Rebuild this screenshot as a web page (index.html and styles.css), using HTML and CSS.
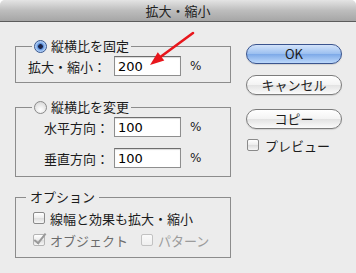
FILE: index.html
```html
<!DOCTYPE html>
<html>
<head>
<meta charset="utf-8">
<title>拡大・縮小</title>
<link rel="stylesheet" href="styles.css">
</head>
<body>
<div class="window">
	<div class="titlebar">拡大・縮小</div>
	<div class="content">
		<div class="left">
			<fieldset class="group g1">
				<legend><span class="radio on"></span>縦横比を固定</legend>
				<div class="row">
					<span class="label">拡大・縮小：</span>
					<span class="field">200</span>
					<span class="pct">%</span>
				</div>
			</fieldset>
			<fieldset class="group g2">
				<legend><span class="radio"></span>縦横比を変更</legend>
				<div class="row">
					<span class="label">水平方向：</span>
					<span class="field">100</span>
					<span class="pct">%</span>
				</div>
				<div class="row">
					<span class="label">垂直方向：</span>
					<span class="field">100</span>
					<span class="pct">%</span>
				</div>
			</fieldset>
			<fieldset class="group g3">
				<legend>オプション</legend>
				<div class="crow"><span class="check"></span>線幅と効果も拡大・縮小</div>
				<div class="crow dim">
					<span class="check checked"></span><span class="obj">オブジェクト</span>
					<span class="check faint"></span><span class="faint-text">パターン</span>
				</div>
			</fieldset>
		</div>
		<div class="right">
			<div class="btn default">OK</div>
			<div class="btn">キャンセル</div>
			<div class="btn copy">コピー</div>
			<div class="crow preview"><span class="check"></span>プレビュー</div>
		</div>
	</div>
	<svg class="arrow" width="356" height="273" viewBox="0 0 356 273">
		<line x1="193" y1="33" x2="161" y2="56.5" stroke="#e8161c" stroke-width="2.6" stroke-linecap="round"/>
		<polygon points="150,65 164.3,60.6 157.8,52.2" fill="#e8161c"/>
	</svg>
</div>
</body>
</html>
```

FILE: styles.css
```css
html, body {
margin: 0;
padding: 0;
background: #fff;
}
body {
font-family: "Noto Sans CJK JP", "DejaVu Sans", sans-serif;
font-size: 13px;
color: #1c1c1c;
}

.window {
position: relative;
width: 356px;
height: 273px;
background: #ececec;
border-radius: 5px 5px 0 0;
overflow: hidden;
}

.titlebar {
height: 21px;
line-height: 21px;
text-align: center;
font-size: 13px;
color: #222;
background: linear-gradient(#e4e4e4, #bdbdbd 50%, #a6a6a6);
border-bottom: 1px solid #5c5c5c;
}

.content {
display: flex;
padding: 16px 0 0 15px;
}

.left {
width: 216px;
}

.right {
display: flex;
flex-direction: column;
margin-left: 15px;
padding-top: 6px;
width: 96px;
}

/* group boxes */
.group {
margin: 0;
padding: 2px 0 6px 0;
border: 1px solid #8c8c8c;
min-width: 0;
}
.group legend {
display: flex;
align-items: center;
margin-left: 16px;
padding: 0 2px;
height: 16px;
line-height: 16px;
}
.g2 {
margin-top: 16px;
padding-bottom: 8px;
}
.g3 {
margin-top: 12px;
padding: 5px 0 9px 17px;
}
.g3 legend {
margin-left: -7px;
padding: 0 4px;
}

.row {
display: flex;
align-items: center;
height: 20px;
}
.g1 .row { padding-left: 12px; }
.g1 .label { width: 86px; }
.g2 .row { padding-left: 28px; }
.g2 .label { width: 70px; }
.g2 .row + .row { margin-top: 11px; }

.label {
white-space: nowrap;
}
.field {
box-sizing: border-box;
width: 67px;
height: 20px;
padding-left: 3px;
line-height: 19px;
font-family: "DejaVu Sans", sans-serif;
font-size: 13px;
color: #000;
background: #fff;
border: 1px solid #8e8e8e;
border-top-color: #6e6e6e;
box-shadow: inset 0 1px 1px rgba(0,0,0,0.15);
}
.pct {
margin-left: 9px;
font-family: "DejaVu Sans", sans-serif;
font-size: 12px;
}

/* radios and checks */
.radio {
box-sizing: border-box;
width: 13px;
height: 13px;
margin-right: 4px;
border-radius: 50%;
border: 1px solid #8a8a8a;
background: radial-gradient(circle at 50% 70%, #ffffff, #e4e4e4 60%, #cfcfcf);
}
.radio.on {
border-color: #35568f;
background: radial-gradient(circle at 50% 50%, #1b2447 0, #1b2447 2px, #4f83d0 2.6px, #8fb8ef 4px, #c9defa 6px);
}

.crow {
display: flex;
align-items: center;
height: 16px;
white-space: nowrap;
}
.crow + .crow {
margin-top: 6px;
}
.check {
box-sizing: border-box;
position: relative;
width: 12px;
height: 12px;
margin-right: 5px;
border: 1px solid #8a8a8a;
border-radius: 2px;
background: linear-gradient(#ffffff, #ececec 50%, #dcdcdc 51%, #f6f6f6);
}
.check.checked {
border-color: #b4b4b4;
}
.check.checked::after {
content: "";
position: absolute;
left: 3px;
top: -4px;
width: 4px;
height: 11px;
border: solid #9a9a9a;
border-width: 0 2px 2px 0;
transform: rotate(38deg);
}
.check.faint {
margin-left: 13px;
border-color: #c2c2c2;
background: linear-gradient(#fafafa, #efefef);
}
.dim .obj {
color: #6c6c6c;
}
.faint-text {
color: #9c9c9c;
}

/* buttons */
.btn {
box-sizing: border-box;
height: 20px;
line-height: 18px;
text-align: center;
border: 1px solid #7c7c7c;
border-radius: 10px;
background: linear-gradient(#ffffff, #f3f3f3 50%, #e3e3e3 52%, #fbfbfb);
box-shadow: 0 1px 1px rgba(0,0,0,0.12);
}
.btn + .btn {
margin-top: 11px;
}
.btn.default {
border-color: #3a548e;
background: linear-gradient(#d3e3fa, #9cc0f0 48%, #7eaae8 52%, #bcd8fb);
}
.btn.copy {
margin-top: 14px;
}
.preview {
margin-top: 8px;
margin-left: 1px;
}
.preview .check {
margin-right: 6px;
}

.arrow {
position: absolute;
left: 0;
top: 0;
pointer-events: none;
}
```
